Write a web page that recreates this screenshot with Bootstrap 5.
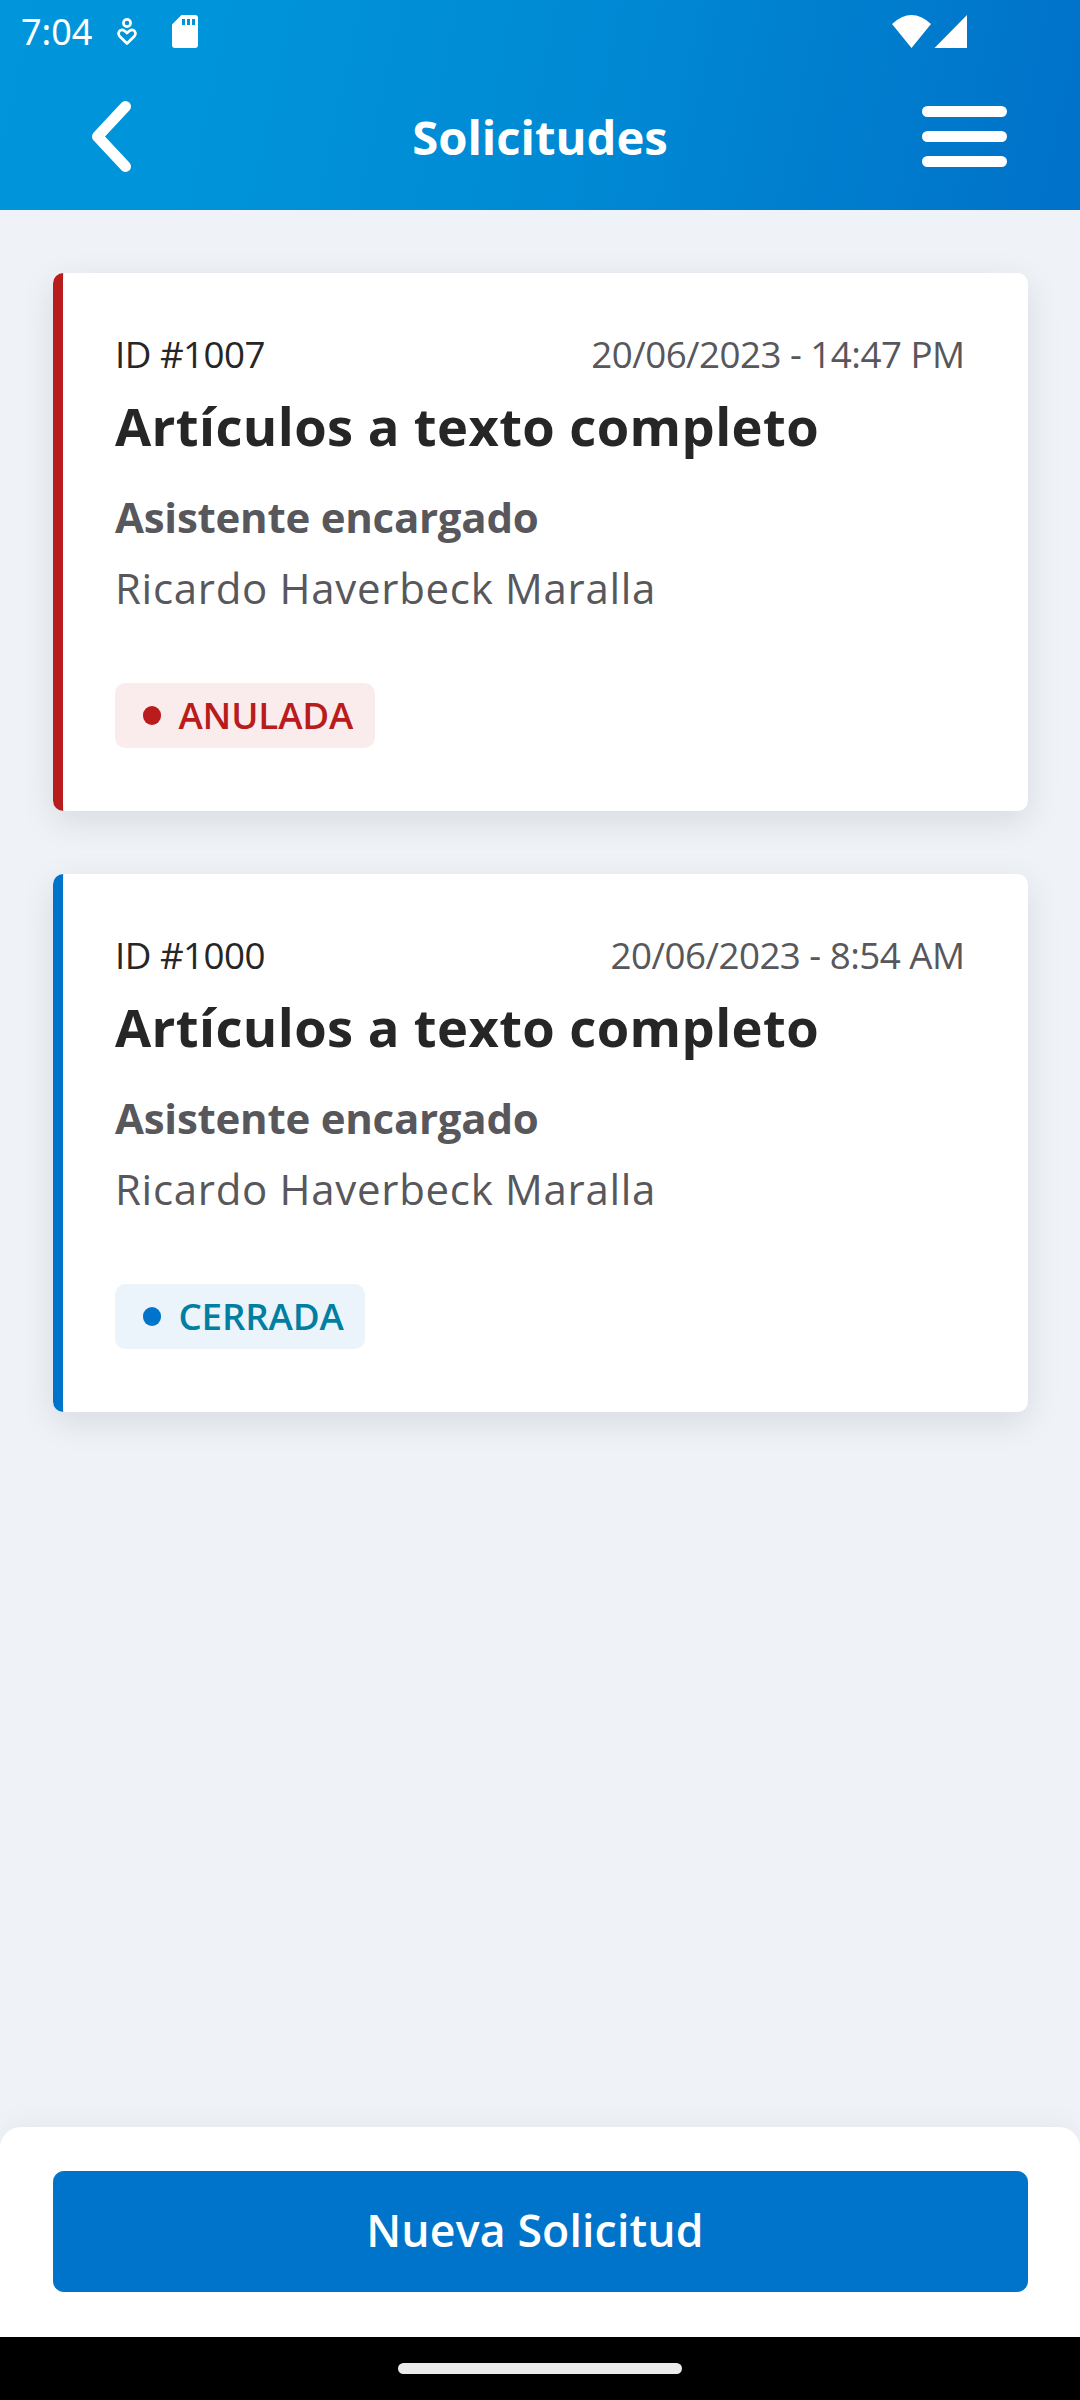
<!DOCTYPE html>
<html lang="es">
<head>
<meta charset="utf-8">
<meta name="viewport" content="width=device-width, initial-scale=1">
<title>Solicitudes</title>
<link href="https://cdn.jsdelivr.net/npm/bootstrap@5.3.0/dist/css/bootstrap.min.css" rel="stylesheet">
<style>
body{height:2400px;overflow:hidden;background:#eff3f8;color:#262626;font-family:"Open Sans","Noto Sans",sans-serif}
.app-head{height:210px;background:linear-gradient(102deg,#0096da 0%,#0094da 20%,#0089d4 55%,#007bcd 82%,#0071c9 100%)}
.status-row{height:63px;padding:0 113px 0 21px}
.clock{font:400 36px/64px "Noto Sans",sans-serif;width:96px;padding-top:1px}
.title-row{height:147px;padding:0 73px 0 92px}
.side-start{width:120px}
.side-end{width:139px}
.app-title{font-size:47.25px;font-weight:700;line-height:146px}
.requests{padding:63px 52.5px;gap:63px}
.request{border:0;border-left:10.5px solid var(--tone);border-radius:10.5px;height:538px;box-shadow:0 10px 34px rgba(0,0,0,.1);padding:56px 63px 0 52.5px}
.tone-red{--tone:#b91c1c;--chip:#faeced;--ink:#b91c1c}
.tone-blue{--tone:#0073ca;--chip:#ebf4fb;--ink:#007fa3}
.meta{font-size:36.75px;line-height:50px;letter-spacing:-.53px;margin-bottom:10.5px}
.muted{color:#57575c}
.req-title{font-size:52.5px;font-weight:700;line-height:72px;letter-spacing:.4px;margin-bottom:26.5px}
.assist{font-size:42px;line-height:57px;margin-bottom:14px;letter-spacing:-.25px}
.who{font-size:42px;line-height:57px;margin-bottom:67px;letter-spacing:.7px}
.chip{height:65px;background:var(--chip);color:var(--ink);border-radius:10.5px;font-size:36.75px;font-weight:600;letter-spacing:-.15px;padding:0 21.5px 0 27.5px;gap:17.5px}
.dot{width:18.4px;height:18.4px;background:var(--tone)}
.sheet{height:210px;background:#fff;border-radius:21px 21px 0 0;padding:44px 52.5px;box-shadow:0 -4px 30px rgba(0,0,0,.045)}
.btn-new{--bs-btn-bg:#0073ca;--bs-btn-color:#fff;--bs-btn-border-color:#0073ca;height:121px;border-radius:10.5px;font-size:44.6px;font-weight:600;letter-spacing:.15px;line-height:1;padding:0 10px 2px 0}
.nav-strip{height:63px;background:#000}
.handle{width:284px;height:11px;border-radius:6px;background:#ebebeb}
</style>
</head>
<body class="d-flex flex-column">
<header class="app-head flex-shrink-0 text-white">
  <div class="status-row d-flex align-items-center">
    <span class="clock">7:04</span>
    <svg width="20" height="30" viewBox="0 0 20 30" fill="none" stroke="#fff" stroke-width="2.700"><circle cx="10" cy="6" r="3.600"/><path d="M10 26.500 2.600 19.200C.6 16.800 1.600 13.300 4.800 12.900c2.200-.2 3.400 1.200 5.200 3.200 1.800-2 3-3.400 5.200-3.200 3.200.4 4.200 3.900 2.200 6.300Z" stroke-linejoin="round"/></svg>
    <svg style="margin-left:35px" width="26" height="33" viewBox="0 0 26 33"><path fill="#fff" fill-rule="evenodd" d="M9.500 0H23a3 3 0 0 1 3 3v27a3 3 0 0 1-3 3H3a3 3 0 0 1-3-3V9.500ZM10 4v6h3V4Zm5 0v6h3V4Zm5 0v6h3V4Z"/></svg>
    <svg class="ms-auto" width="75" height="33" viewBox="0 0 75 33" fill="#fff"><path d="M0 9Q19.500-9 39 9L19.500 33ZM75 0v33H42.500Z"/></svg>
  </div>
  <div class="title-row d-flex align-items-center justify-content-between">
    <div class="side-start"><svg class="d-block" width="40" height="71" viewBox="0 0 40 71" fill="none" stroke="#fff" stroke-width="11" stroke-linecap="round" stroke-linejoin="round"><path d="M33.500 5.500 5.500 35.500l28 30"/></svg></div>
    <h1 class="app-title m-0">Solicitudes</h1>
    <div class="side-end d-flex justify-content-end"><svg class="d-block" width="85" height="61" viewBox="0 0 85 61" fill="#fff"><rect width="85" height="11" rx="5.500"/><rect y="25" width="85" height="11" rx="5.500"/><rect y="50" width="85" height="11" rx="5.500"/></svg></div>
  </div>
</header>
<main class="requests flex-grow-1 d-flex flex-column">
  <article class="card request tone-red">
    <div class="meta d-flex justify-content-between"><span>ID #1007</span><span class="muted">20/06/2023 - 14:47 PM</span></div>
    <h2 class="req-title">Artículos a texto completo</h2>
    <div class="assist muted fw-bold">Asistente encargado</div>
    <div class="who muted">Ricardo Haverbeck Maralla</div>
    <div class="chip d-inline-flex align-items-center align-self-start"><span class="dot rounded-circle"></span>ANULADA</div>
  </article>
  <article class="card request tone-blue">
    <div class="meta d-flex justify-content-between"><span>ID #1000</span><span class="muted">20/06/2023 - 8:54 AM</span></div>
    <h2 class="req-title">Artículos a texto completo</h2>
    <div class="assist muted fw-bold">Asistente encargado</div>
    <div class="who muted">Ricardo Haverbeck Maralla</div>
    <div class="chip d-inline-flex align-items-center align-self-start"><span class="dot rounded-circle"></span>CERRADA</div>
  </article>
</main>
<footer class="flex-shrink-0">
  <div class="sheet"><button class="btn btn-new w-100" type="button">Nueva Solicitud</button></div>
  <div class="nav-strip d-flex align-items-center justify-content-center"><div class="handle"></div></div>
</footer>
<script src="https://cdn.jsdelivr.net/npm/bootstrap@5.3.0/dist/js/bootstrap.bundle.min.js"></script>
</body>
</html>
